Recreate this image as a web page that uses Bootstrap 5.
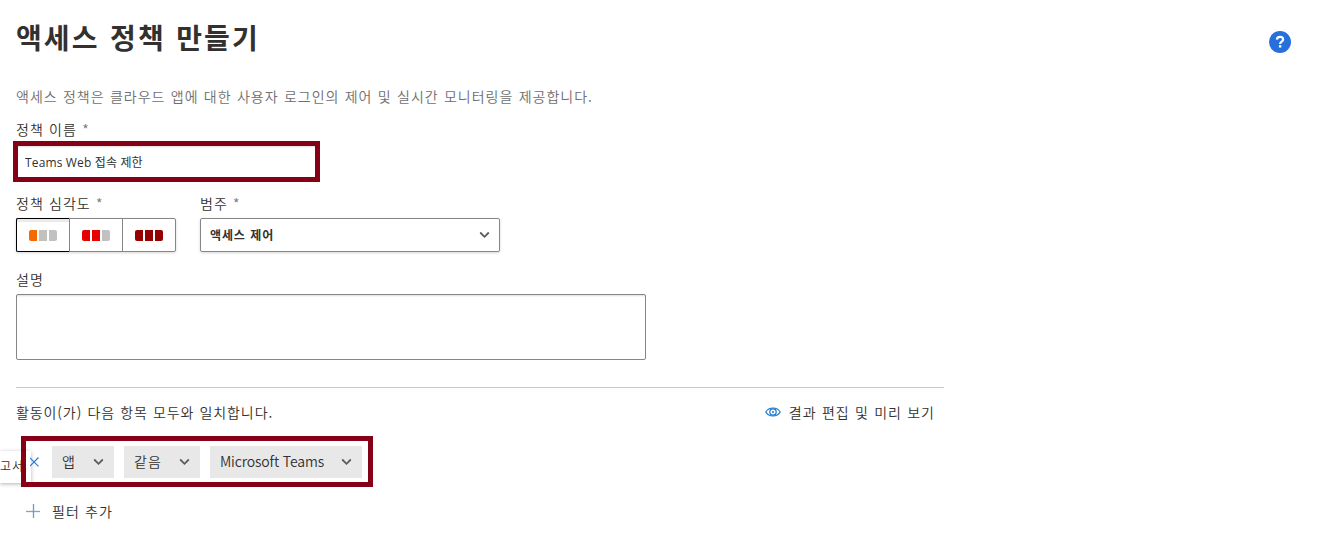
<!DOCTYPE html>
<html lang="ko">
<head>
    <meta charset="UTF-8">
    <meta name="viewport" content="width=device-width, initial-scale=1.0">
    <title>액세스 정책 만들기</title>
    <!-- Bootstrap CSS -->
    <link href="https://cdn.jsdelivr.net/npm/bootstrap@5.3.3/dist/css/bootstrap.min.css" rel="stylesheet">
    <style>
        body {
            font-family: "Open Sans", "Noto Sans CJK KR", sans-serif;
            font-size: 14px;
            line-height: 20px;
            color: #323130;
            background: #fff;
            overflow: hidden;
        }
        .ko { font-family: "Noto Sans CJK KR", sans-serif; font-weight: 350; letter-spacing: 1px; word-spacing: .4px; white-space: nowrap; }
        .page-title { font-size: 28px; font-weight: 700; line-height: 40px; letter-spacing: 2.1px; word-spacing: .5px; }
        .page-head { height: 86px; padding: 17px 33px 0 0; }
        .help-icon { margin-top: 14px; }
        .intro { color: #6e6e6e; height: 33px; }
        .req { color: #767676; font-size: 14px; }

        /* red highlight frames */
        .marked { border: 5px solid #850016; }
        .name-mark { width: 307px; height: 41px; margin: 2px 0 11px -3px; }
        .name-input {
            height: 31px; padding: 0 7px; border: 0; border-radius: 0;
            font-size: 12px; letter-spacing: .15px; color: #323130;
            box-shadow: inset 0 2px 2px -1px #ddd;
            font-family: "Open Sans", "Noto Sans CJK KR", sans-serif;
        }

        .severity { margin-top: 5px; width: 160px; height: 34px; box-shadow: 0 1px 3px rgba(0, 0, 0, .16); border-radius: 2px; }
        .severity .btn { width: 54px; padding: 0; border: 1px solid #868686; border-radius: 0; line-height: 1; }
        .severity .btn:first-child { border-color: #000; border-radius: 2px 0 0 2px; border-right-color: #868686; box-shadow: inset 0 3px 0 #ebebeb; }
        .severity .btn:last-child { border-radius: 0 2px 2px 0; }
        .level { gap: 2px; }
        .level span { width: 8px; height: 11px; background: #c1c1bf; }
        .level span:first-child { border-radius: 2px 0 0 2px; }
        .level span:last-child { border-radius: 0 2px 2px 0; }
        .level .low { background: #f56a00; }
        .level .mid { background: #e60000; }
        .level .high { background: #960000; }

        .category { margin-top: 5px; width: 300px; height: 34px; border: 1px solid #868686; border-radius: 2px; padding: 0 9px; box-shadow: 0 1px 3px rgba(0, 0, 0, .16); }
        .category .ko { font-size: 12px; font-weight: 700; letter-spacing: .85px; }
        .desc-input { width: 630px; height: 66px; min-height: 0; margin-top: 5px; border: 1px solid #868686; border-radius: 2px; resize: none; box-shadow: inset 0 2px 2px -1px #ddd; }
        .filters { width: 928px; margin-top: 27px; border-top: 1px solid #c8c8c8; padding-top: 14px; }
        .filter-title { letter-spacing: .9px; }
        .preview-link { gap: 8px; padding-right: 9px; }

        .filter-mark { width: 352px; height: 51px; margin: 14px 0 14px 5px; padding: 0 6px 0 4px; position: relative; z-index: 2; }
        .chip { height: 32px; padding: 0 10px 2px; background: #e8e8e8; border: 0; color: #323130; }
        .chip svg { margin-top: 2px; }
        .chip.latin { font-family: "Noto Sans CJK KR", sans-serif; font-weight: 350; font-size: 14px; letter-spacing: -.14px; }
        .side-tab { position: absolute; left: 0; top: 451px; width: 31px; height: 32px; z-index: 1; background: #fff; font-size: 12px; line-height: 30px; box-shadow: 0 1px 4px rgba(0, 0, 0, .3); overflow: hidden; }
    </style>
</head>
<body>
    <div class="ps-3">
        <div class="page-head d-flex justify-content-between align-items-start">
            <h1 class="page-title ko mb-0">액세스 정책 만들기</h1>
            <svg class="help-icon" width="22" height="22" viewBox="0 0 22 22">
                <circle cx="11" cy="11" r="11" fill="#276fdb"/>
                <path d="M7.9 8.6C8 6.8 9.2 5.9 11 5.9c1.900 0 3.100 1 3.100 2.500 0 2.300-3 2.200-3 4.500" fill="none" stroke="#fff" stroke-width="2.200"/>
                <rect x="9.900" y="14.200" width="2.400" height="2.300" fill="#fff"/>
            </svg>
        </div>
        <div class="intro ko">액세스 정책은 클라우드 앱에 대한 사용자 로그인의 제어 및 실시간 모니터링을 제공합니다.</div>

        <form>
            <label class="ko d-block" for="policyName">정책 이름 <span class="req">*</span></label>
            <div class="marked name-mark">
                <input type="text" id="policyName" class="form-control name-input" value="Teams Web 접속 제한">
            </div>

            <div class="d-flex gap-4">
                <div>
                    <div class="ko">정책 심각도 <span class="req">*</span></div>
                    <div class="btn-group severity">
                        <button type="button" class="btn d-flex align-items-center justify-content-center">
                            <span class="level d-flex"><span class="low"></span><span></span><span></span></span>
                        </button>
                        <button type="button" class="btn d-flex align-items-center justify-content-center">
                            <span class="level d-flex"><span class="mid"></span><span class="mid"></span><span></span></span>
                        </button>
                        <button type="button" class="btn d-flex align-items-center justify-content-center">
                            <span class="level d-flex"><span class="high"></span><span class="high"></span><span class="high"></span></span>
                        </button>
                    </div>
                </div>
                <div>
                    <div class="ko">범주 <span class="req">*</span></div>
                    <div class="category d-flex align-items-center justify-content-between">
                        <span class="ko">액세스 제어</span>
                        <svg width="11" height="8" viewBox="0 0 11 8" fill="none" stroke="#5c5c5c" stroke-width="1.800"><path d="M1.200 1.500l4.300 4.300 4.300-4.300"/></svg>
                    </div>
                </div>
            </div>

            <div class="pt-3 mt-1">
                <label class="ko d-block" for="policyDesc" style="margin-top: -3px">설명</label>
                <textarea id="policyDesc" class="form-control desc-input"></textarea>
            </div>
        </form>

        <div class="filters">
            <div class="d-flex justify-content-between">
                <span class="ko filter-title">활동이(가) 다음 항목 모두와 일치합니다.</span>
                <span class="preview-link d-flex align-items-center">
                    <svg width="16" height="10" viewBox="0 0 16 10" fill="none" stroke="#1a78d2" stroke-width="1.200">
                        <path d="M.8 5C2.400 2.300 5 1 8 1s5.600 1.300 7.200 4C13.600 7.700 11 9 8 9S2.400 7.700.8 5z"/>
                        <circle cx="8" cy="5" r="3.200"/>
                        <circle cx="8" cy="5" r="1" fill="#1a78d2" stroke="none"/>
                    </svg>
                    <span class="ko">결과 편집 및 미리 보기</span>
                </span>
            </div>

            <div class="marked filter-mark d-flex align-items-center">
                <svg class="me-auto" width="9" height="10" viewBox="0 0 9 10" stroke="#2b7cd3" stroke-width="1.200"><path d="M0 .9l8.500 8.500M8.500.5L0 9"/></svg>
                <div class="d-flex" style="gap: 10px">
                    <button type="button" class="chip ko d-flex align-items-center justify-content-between" style="width: 62px">앱
                        <svg width="11" height="8" viewBox="0 0 11 8" fill="none" stroke="#5c5c5c" stroke-width="1.800"><path d="M1.200 1.500l4.300 4.300 4.300-4.300"/></svg>
                    </button>
                    <button type="button" class="chip ko d-flex align-items-center justify-content-between" style="width: 76px">같음
                        <svg width="11" height="8" viewBox="0 0 11 8" fill="none" stroke="#5c5c5c" stroke-width="1.800"><path d="M1.200 1.500l4.300 4.300 4.300-4.300"/></svg>
                    </button>
                    <button type="button" class="chip latin d-flex align-items-center justify-content-between" style="width: 152px">Microsoft Teams
                        <svg width="11" height="8" viewBox="0 0 11 8" fill="none" stroke="#5c5c5c" stroke-width="1.800"><path d="M1.200 1.500l4.300 4.300 4.300-4.300"/></svg>
                    </button>
                </div>
            </div>

            <div class="d-flex align-items-center" style="gap: 12px; padding-left: 10px">
                <svg width="14" height="14" viewBox="0 0 14 14" stroke-width="1.300"><path d="M0 7.500h14" stroke="#6ea8e0"/><path d="M7.500 0v14" stroke="#7d8fdc"/></svg>
                <span class="ko">필터 추가</span>
            </div>
        </div>
    </div>

    <div class="side-tab ko">고서</div>

    <!-- Bootstrap JS -->
    <script src="https://cdn.jsdelivr.net/npm/bootstrap@5.3.3/dist/js/bootstrap.bundle.min.js"></script>
</body>
</html>
